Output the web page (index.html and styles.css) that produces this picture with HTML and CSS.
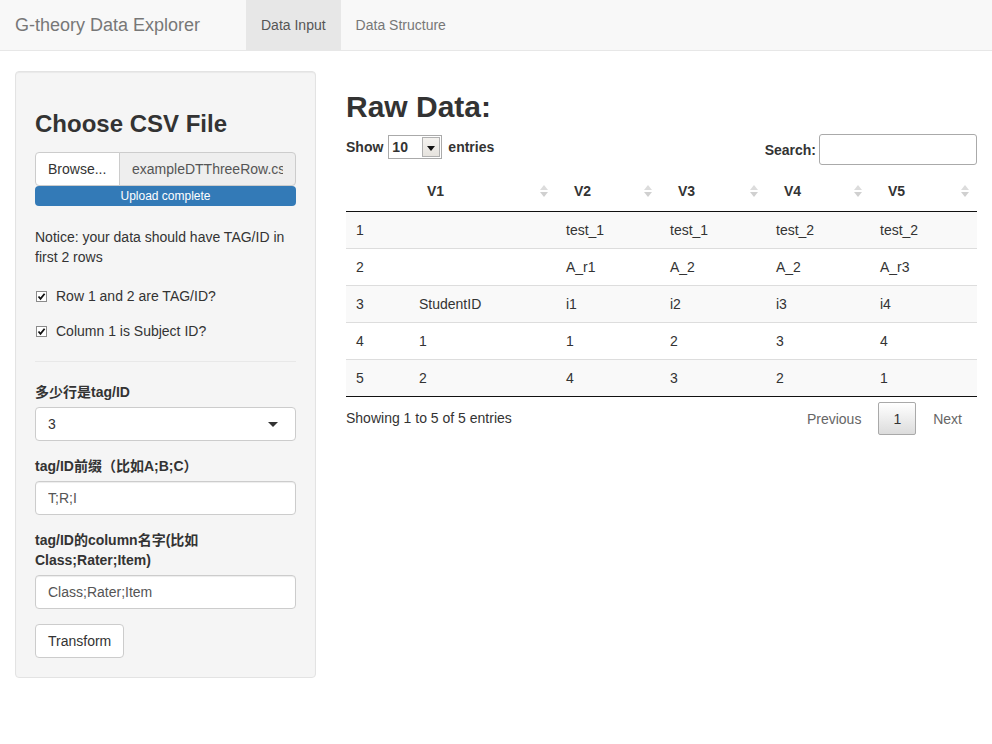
FILE: index.html
```html
<!DOCTYPE html>
<html lang="en">
<head>
<meta charset="utf-8">
<title>G-theory Data Explorer</title>
<link rel="stylesheet" href="styles.css">
</head>
<body>
<nav class="navbar">
  <span class="brand">G-theory Data Explorer</span>
  <ul class="nav">
    <li class="active"><a href="#">Data Input</a></li>
    <li><a href="#">Data Structure</a></li>
  </ul>
</nav>

<div class="page">
  <aside class="well">
    <h3 class="well-title">Choose CSV File</h3>
    <div class="file-group">
      <div class="input-group">
        <span class="btn-browse">Browse...</span>
        <input class="file-name" type="text" readonly value="exampleDTThreeRow.csv">
      </div>
      <div class="progress"><div class="progress-bar">Upload complete</div></div>
    </div>

    <p class="notice">Notice: your data should have TAG/ID in first 2 rows</p>

    <label class="check">
      <svg class="check-box" width="11" height="11" viewBox="0 0 11 11"><rect x="0.5" y="0.5" width="10" height="10" fill="#fff" stroke="#8a8a8a"/><path d="M2.5 5.5 L4.5 7.8 L8.6 2.8" fill="none" stroke="#111" stroke-width="1.8"/></svg>
      <span>Row 1 and 2 are TAG/ID?</span>
    </label>
    <label class="check check-second">
      <svg class="check-box" width="11" height="11" viewBox="0 0 11 11"><rect x="0.5" y="0.5" width="10" height="10" fill="#fff" stroke="#8a8a8a"/><path d="M2.5 5.5 L4.5 7.8 L8.6 2.8" fill="none" stroke="#111" stroke-width="1.8"/></svg>
      <span>Column 1 is Subject ID?</span>
    </label>

    <hr class="divider">

    <div class="form-group">
      <label class="field-label">多少行是tag/ID</label>
      <div class="select-box"><span>3</span><span class="caret"></span></div>
    </div>
    <div class="form-group">
      <label class="field-label">tag/ID前缀（比如A;B;C）</label>
      <input class="form-control" type="text" value="T;R;I">
    </div>
    <div class="form-group">
      <label class="field-label">tag/ID的column名字(比如<br>Class;Rater;Item)</label>
      <input class="form-control" type="text" value="Class;Rater;Item">
    </div>
    <button class="btn" type="button">Transform</button>
  </aside>

  <main class="main">
    <h2 class="main-title">Raw Data:</h2>
    <div class="dt-top">
      <div class="dt-length">
        <span>Show</span>
        <span class="len-select"><span class="len-value">10</span><span class="len-arrow"></span></span>
        <span>entries</span>
      </div>
      <div class="dt-filter">
        <span>Search:</span>
        <input class="search-input" type="search">
      </div>
    </div>

    <table class="dt">
      <colgroup>
        <col class="c-idx"><col class="c-v1"><col class="c-v2"><col class="c-v3"><col class="c-v4"><col class="c-v5">
      </colgroup>
      <thead>
        <tr>
          <th></th>
          <th><div class="th-in"><span>V1</span><svg class="sort" width="8" height="14" viewBox="0 0 8 14"><polygon points="0,6 4,1 8,6" fill="#dcdcdc"/><polygon points="0,8 4,13 8,8" fill="#d0d0d0"/></svg></div></th>
          <th><div class="th-in"><span>V2</span><svg class="sort" width="8" height="14" viewBox="0 0 8 14"><polygon points="0,6 4,1 8,6" fill="#dcdcdc"/><polygon points="0,8 4,13 8,8" fill="#d0d0d0"/></svg></div></th>
          <th><div class="th-in"><span>V3</span><svg class="sort" width="8" height="14" viewBox="0 0 8 14"><polygon points="0,6 4,1 8,6" fill="#dcdcdc"/><polygon points="0,8 4,13 8,8" fill="#d0d0d0"/></svg></div></th>
          <th><div class="th-in"><span>V4</span><svg class="sort" width="8" height="14" viewBox="0 0 8 14"><polygon points="0,6 4,1 8,6" fill="#dcdcdc"/><polygon points="0,8 4,13 8,8" fill="#d0d0d0"/></svg></div></th>
          <th><div class="th-in"><span>V5</span><svg class="sort" width="8" height="14" viewBox="0 0 8 14"><polygon points="0,6 4,1 8,6" fill="#dcdcdc"/><polygon points="0,8 4,13 8,8" fill="#d0d0d0"/></svg></div></th>
        </tr>
      </thead>
      <tbody>
        <tr class="odd"><td>1</td><td></td><td>test_1</td><td>test_1</td><td>test_2</td><td>test_2</td></tr>
        <tr><td>2</td><td></td><td>A_r1</td><td>A_2</td><td>A_2</td><td>A_r3</td></tr>
        <tr class="odd"><td>3</td><td>StudentID</td><td>i1</td><td>i2</td><td>i3</td><td>i4</td></tr>
        <tr><td>4</td><td>1</td><td>1</td><td>2</td><td>3</td><td>4</td></tr>
        <tr class="odd"><td>5</td><td>2</td><td>4</td><td>3</td><td>2</td><td>1</td></tr>
      </tbody>
    </table>

    <div class="dt-bottom">
      <div class="dt-info">Showing 1 to 5 of 5 entries</div>
      <div class="dt-paging">
        <span class="pg-btn disabled">Previous</span>
        <span class="pg-btn current">1</span>
        <span class="pg-btn disabled">Next</span>
      </div>
    </div>
  </main>
</div>
</body>
</html>
```

FILE: styles.css
```css
* { box-sizing: border-box; }

body {
  margin: 0;
  font-family: "Liberation Sans", Arial, "Noto Sans CJK SC", sans-serif;
  font-size: 14px;
  line-height: 20px;
  color: #333;
  background: #fff;
}

/* Navbar */
.navbar {
  display: flex;
  height: 51px;
  background: #f8f8f8;
  border-bottom: 1px solid #e7e7e7;
}
.brand {
  width: 246px;
  padding: 15px 0 15px 15px;
  font-size: 18px;
  line-height: 20px;
  color: #777;
}
.nav {
  display: flex;
  margin: 0;
  padding: 0;
  list-style: none;
}
.nav a {
  display: block;
  padding: 15px;
  height: 50px;
  line-height: 20px;
  color: #777;
  text-decoration: none;
}
.nav .active a {
  background: #e7e7e7;
  color: #555;
}

/* Page layout */
.page {
  display: grid;
  grid-template-columns: 301px 1fr;
  column-gap: 30px;
  padding: 20px 15px 0;
  align-items: start;
}

/* Sidebar well */
.well {
  background: #f5f5f5;
  border: 1px solid #e3e3e3;
  border-radius: 4px;
  box-shadow: inset 0 1px 1px rgba(0,0,0,.05);
  padding: 19px;
}
.well-title {
  margin: 20px 0 15px;
  font-size: 24px;
  line-height: 26px;
  font-weight: 700;
  color: #333;
}
.file-group { margin-bottom: 21px; }
.input-group {
  display: flex;
  height: 34px;
}
.btn-browse {
  flex: 0 0 85px;
  padding: 6px 12px;
  background: #fff;
  border: 1px solid #ccc;
  border-radius: 4px 0 0 4px;
  color: #333;
}
.file-name {
  flex: 1;
  min-width: 0;
  margin-left: -1px;
  padding: 6px 12px;
  font: inherit;
  color: #555;
  background: #eee;
  border: 1px solid #ccc;
  border-radius: 0 4px 4px 0;
  outline: none;
}
.progress {
  height: 20px;
  background: #f5f5f5;
  border-radius: 4px;
  overflow: hidden;
}
.progress-bar {
  height: 20px;
  background: #337ab7;
  color: #fff;
  font-size: 12px;
  line-height: 20px;
  text-align: center;
}
.notice {
  margin: 0 0 19px;
}
.check {
  display: flex;
  align-items: center;
  height: 20px;
  color: #333;
}
.check-second { margin-top: 15px; }
.check-box {
  margin: 0 9px 0 1px;
  flex: none;
}
.divider {
  margin: 20px 0;
  border: 0;
  border-top: 1px solid #e8e8e8;
}
.form-group { margin-bottom: 15px; }
.field-label {
  display: block;
  margin-bottom: 5px;
  font-weight: 700;
}
.select-box {
  position: relative;
  display: flex;
  align-items: center;
  height: 34px;
  padding: 6px 12px;
  background: #fff;
  border: 1px solid #ccc;
  border-radius: 4px;
  color: #333;
}
.caret {
  margin-left: auto;
  margin-right: 5px;
  width: 0;
  height: 0;
  border-style: solid;
  border-width: 5px 5px 0;
  border-color: #333 transparent transparent;
}
.form-control {
  display: block;
  width: 100%;
  height: 34px;
  padding: 6px 12px;
  font: inherit;
  color: #555;
  background: #fff;
  border: 1px solid #ccc;
  border-radius: 4px;
  box-shadow: inset 0 1px 1px rgba(0,0,0,.075);
}
.btn {
  height: 34px;
  padding: 6px 12px;
  font: inherit;
  color: #333;
  background: #fff;
  border: 1px solid #ccc;
  border-radius: 4px;
}

/* Main */
.main { min-width: 0; }
.main-title {
  margin: 19px 0 10px;
  font-size: 30px;
  line-height: 33px;
  font-weight: 700;
  color: #333;
}
.dt-top {
  display: flex;
  justify-content: space-between;
  align-items: flex-start;
  height: 38px;
  font-weight: 700;
}
.dt-length {
  display: flex;
  align-items: center;
  gap: 5px;
  height: 24px;
  margin-top: 2px;
}
.len-select {
  display: inline-flex;
  width: 54px;
  height: 24px;
  border: 1px solid #aaa;
  background: #fff;
  margin-right: 1px;
}
.len-value {
  flex: 1;
  padding-left: 3px;
  line-height: 22px;
}
.len-arrow {
  position: relative;
  width: 18px;
  margin: 1px;
  background: linear-gradient(#f4f2ef, #e6e3de);
  border: 1px solid #b0b0b0;
}
.len-arrow::after {
  content: "";
  position: absolute;
  left: 4px;
  top: 8px;
  border-style: solid;
  border-width: 5px 4px 0;
  border-color: #111 transparent transparent;
}
.dt-filter {
  display: flex;
  align-items: center;
  margin-top: 1px;
}
.search-input {
  width: 158px;
  height: 31px;
  margin-left: 3px;
  padding: 5px;
  font: inherit;
  border: 1px solid #aaa;
  border-radius: 3px;
  background: #fff;
}

.dt {
  width: 100%;
  table-layout: fixed;
  border-collapse: separate;
  border-spacing: 0;
  border-bottom: 1px solid #111;
}
.c-idx { width: 63px; }
.c-v1 { width: 147px; }
.c-v2 { width: 104px; }
.c-v3 { width: 106px; }
.c-v4 { width: 104px; }
.c-v5 { width: 107px; }
.dt th {
  padding: 10px 8px 10px 18px;
  text-align: left;
  font-weight: 700;
  border-bottom: 1px solid #111;
}
.th-in {
  display: flex;
  justify-content: space-between;
  align-items: center;
  height: 20px;
}
.sort { flex: none; }
.dt td {
  padding: 8px 10px;
  border-top: 1px solid #ddd;
  white-space: nowrap;
}
.dt tbody tr:first-child td { border-top: none; }
.dt tr.odd td { background: #f9f9f9; }

.dt-bottom {
  display: flex;
  justify-content: space-between;
  align-items: flex-start;
}
.dt-info {
  padding-top: 11px;
}
.dt-paging {
  display: flex;
  padding-top: 5px;
}
.pg-btn {
  height: 33px;
  padding: 6px 14px;
  margin-left: 2px;
  border: 1px solid transparent;
  border-radius: 2px;
  color: #666;
}
.pg-btn.current {
  color: #333;
  border-color: #a9a9a9;
  background: linear-gradient(#fff, #dcdcdc);
}
```
